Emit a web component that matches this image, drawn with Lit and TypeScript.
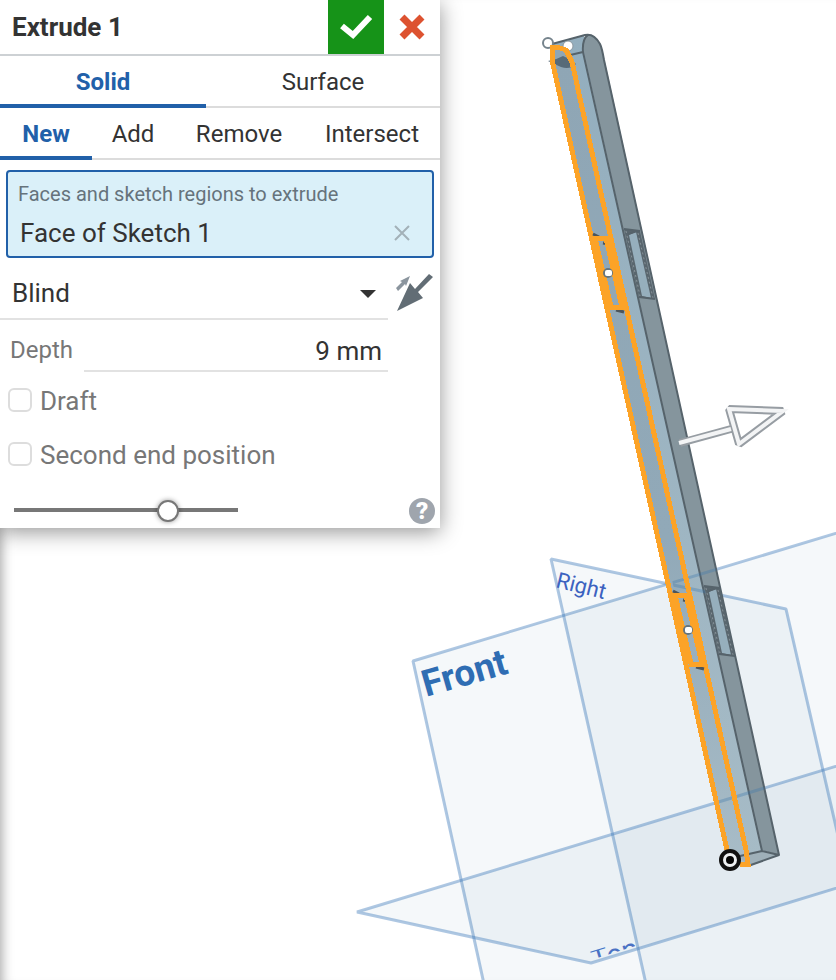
import { LitElement, html, svg, css } from "lit";
import { customElement, state } from "lit/decorators.js";
import { classMap } from "lit/directives/class-map.js";

@customElement("model-viewport")
class ModelViewport extends LitElement {
  static styles = css`
    :host {
      display: block;
    }
    .scene {
      display: block;
      width: 100%;
      height: 100%;
    }
    .plane {
      fill: rgba(80, 132, 172, 0.06);
      stroke: rgba(62, 122, 186, 0.42);
      stroke-width: 3;
      stroke-linejoin: bevel;
    }
    .plane-line {
      fill: none;
      stroke: #3f78ad;
      stroke-width: 3;
      opacity: 0.35;
    }
    .label {
      font-family: Roboto, "Liberation Sans", sans-serif;
      fill: #2f6db3;
    }
    .front {
      font-size: 37px;
      font-weight: 700;
    }
    .right {
      font-size: 22px;
      fill: #3c62c0;
    }
    .top {
      font-size: 28px;
      fill: #4a72c4;
    }
    .edge {
      fill: none;
      stroke: #56636b;
      stroke-width: 2;
      stroke-linejoin: round;
    }
    .picked {
      fill: none;
      stroke: #fca327;
      stroke-width: 5;
      shape-rendering: crispEdges;
    }
    .arrow-outer {
      fill: none;
      stroke: #979da3;
      stroke-width: 8;
      stroke-linejoin: bevel;
    }
    .arrow-inner {
      fill: none;
      stroke: #f3f4f5;
      stroke-width: 4;
    }
  `;

  private slot3d(x: number, y: number) {
    return svg`
      <g transform="translate(${x} ${y})">
        <path d="M624 229L640 231L655 299L639 297Z" fill="#59666e" />
        <path d="M629 235L636 232L651 298L642 296Z" fill="#96afbd" />
        <path d="M626 231L640 296M638 233L653 298" stroke="#879299" stroke-width="1" stroke-dasharray="2 3" />
        <path class="edge" d="M624 229L640 231M628 234L637 231M639 297L655 299" />
        <path d="M593 234l6 3M603 243l6 1M609 304l5 3M616 310l8 2" stroke="#4d555a" stroke-width="3" />
        <path class="picked" d="M592 238H609M609 307H626M595 238L611 307M606 238L622 307" />
        <circle cx="608" cy="273" r="5" fill="#65757f" />
        <rect x="605" y="270" width="7" height="6" rx="2" fill="#ffffff" />
      </g>`;
  }

  render() {
    return html`
      <svg class="scene" viewBox="0 0 836 980" preserveAspectRatio="xMinYMin slice" role="img" aria-label="Extruded bar with reference planes">
        <defs>
          <linearGradient id="face" x1="0" y1="0" x2="0" y2="1">
            <stop offset="0" stop-color="#8fa6b5" />
            <stop offset="0.6" stop-color="#91a9b8" />
            <stop offset="1" stop-color="#a8bcc7" />
          </linearGradient>
          <linearGradient id="rim" x1="0" y1="0" x2="0" y2="1">
            <stop offset="0" stop-color="#93aebe" />
            <stop offset="1" stop-color="#a6bbc6" />
          </linearGradient>
          <clipPath id="bar"><path d="M668 560L714 560L779 855L728 855Z" /></clipPath>
          <clipPath id="topStrip"><path d="M586 953L645 935L645 943L591 960Z" /></clipPath>
        </defs>

        <path class="plane" d="M850 529L413 661L484 984L850 984Z" />
        <path class="plane" d="M551 559L786 609L872 984L646 984Z" />
        <path class="plane" d="M850 762L357 912L591 963L850 884Z" />

        <text class="label front" transform="translate(426 697) rotate(-16)">Front</text>
        <text class="label right" transform="translate(555 587) rotate(14)">Right</text>
        <g clip-path="url(#topStrip)">
          <text class="label top" transform="translate(595 970) rotate(-17)">Top</text>
        </g>

        <path d="M583 52L583 40Q586 32 594 36Q600 40 603 53L779 855L761 850Z" fill="#85959d" />
        <path d="M552 44L584 35L584 52L761 850L779 855L750 866L727 856L551 60Z" fill="url(#rim)" />
        <path d="M551 60Q552 40 568 53L748 865L728 856Z" fill="url(#face)" />
        <path d="M762 851L779 855L748 866L740 857Z" fill="#9fb0b9" />
        <path class="edge" d="M552 44L585 35Q594 33 600 44Q602 48 604 60L779 855L762 851L740 856M779 855L748 866M566 56L583 52L762 851M583 52Q582 39 588 35" />
        <g clip-path="url(#bar)">
          <path class="plane-line" d="M413 661L850 529M551 559L786 609M357 912L850 762" />
        </g>

        <circle cx="548" cy="43" r="5" fill="#ffffff" stroke="#75838c" stroke-width="2" />
        <circle cx="568" cy="46" r="5" fill="#ffffff" stroke="#8a979f" stroke-width="1" />
        <path d="M548 61Q556 60 563 56Q572 60 576 64Q570 70 561 67Z" fill="#586b78" />
        <path class="picked" d="M727 850L552 60V47H557L566 50L572 62L746 850L748 864H740" />
        ${this.slot3d(0, 0)} ${this.slot3d(80, 357)}

        <path class="arrow-outer" d="M680 443L731 429M729 409L783 411L739 444Z" />
        <path class="arrow-inner" d="M679 443L731 429M729 409L783 411L739 444Z" />

        <circle cx="730" cy="860" r="9" fill="#eef0f2" stroke="#111111" stroke-width="4" />
        <circle cx="730" cy="860" r="4" fill="#050505" />
      </svg>
    `;
  }
}

@customElement("extrude-panel")
class ExtrudePanel extends LitElement {
  static styles = css`
    :host {
      display: block;
      box-sizing: border-box;
      background: #ffffff;
      color: #333333;
      font-family: Roboto, "Liberation Sans", sans-serif;
      box-shadow: 0 4px 20px rgba(0, 0, 0, 0.42);
    }
    * {
      box-sizing: border-box;
    }
    button,
    select,
    input {
      font: inherit;
      color: inherit;
      margin: 0;
      padding: 0;
      border: 0;
      background: none;
    }
    svg {
      display: block;
    }
    .header {
      display: flex;
      height: 56px;
      border-bottom: 2px solid #cdd1d4;
    }
    .title {
      flex: 1;
      margin: 0;
      padding-left: 12px;
      font-size: 26px;
      line-height: 54px;
      font-weight: 700;
    }
    .action {
      display: grid;
      place-items: center;
      width: 56px;
      height: 54px;
    }
    .accept {
      background: #169318;
    }
    .tabs {
      display: grid;
      height: 52px;
    }
    .body-type {
      grid-template-columns: 103fr 117fr;
    }
    .operation {
      grid-template-columns: 46fr 41fr 65fr 68fr;
    }
    .tab {
      font-size: 24px;
      line-height: 44px;
      border-bottom: 2px solid #dcdcdc;
      padding: 4px 0 2px;
    }
    .active {
      color: #2160a9;
      font-weight: 700;
      border-bottom: 4px solid #2160a9;
      padding-bottom: 0;
    }
    .picker {
      margin: 10px 6px 0;
      height: 88px;
      padding: 6px 10px;
      border: 2px solid #2160a9;
      border-radius: 4px;
      background: #daf0f9;
    }
    .hint {
      display: block;
      font-size: 20px;
      line-height: 32px;
      color: #66737c;
    }
    .item {
      display: flex;
      justify-content: space-between;
      align-items: center;
      padding: 0 10px 0 2px;
      font-size: 26px;
      line-height: 46px;
    }
    .row {
      display: flex;
      align-items: center;
    }
    .end-type {
      height: 62px;
      gap: 8px;
    }
    .select-wrap {
      display: grid;
      flex: 1;
      align-items: center;
      height: 62px;
      border-bottom: 2px solid #e2e2e2;
    }
    .select {
      grid-area: 1 / 1;
      appearance: none;
      width: 100%;
      height: 60px;
      padding: 10px 12px 0;
      font-size: 26px;
    }
    .caret {
      grid-area: 1 / 1;
      justify-self: end;
      margin: 12px 12px 0 0;
      pointer-events: none;
    }
    .flip {
      width: 44px;
      padding-top: 8px;
    }
    .depth {
      height: 52px;
      padding: 0 52px 0 10px;
    }
    .depth-label {
      width: 74px;
      padding-top: 8px;
      font-size: 24px;
      color: #777777;
    }
    .depth-input {
      flex: 1;
      min-width: 0;
      height: 52px;
      padding: 12px 6px 0 0;
      font-size: 26px;
      text-align: right;
      border-bottom: 2px solid #e2e2e2;
    }
    .checks {
      display: grid;
      gap: 20px;
      padding: 12px 8px 0;
    }
    .check {
      display: flex;
      align-items: flex-start;
      gap: 8px;
      font-size: 26px;
      line-height: 34px;
      color: #777777;
    }
    .box {
      appearance: none;
      width: 24px;
      height: 24px;
      margin-top: 4px;
      border: 2px solid #dddddd;
      border-radius: 6px;
      background: #ffffff;
    }
    .box:checked {
      background: #2160a9;
    }
    .footer {
      display: flex;
      justify-content: space-between;
      align-items: center;
      height: 56px;
      padding: 20px 5px 0 14px;
    }
    .slider {
      appearance: none;
      width: 224px;
      height: 24px;
    }
    .slider::-webkit-slider-runnable-track {
      height: 4px;
      background: #777777;
    }
    .slider::-webkit-slider-thumb {
      appearance: none;
      width: 22px;
      height: 22px;
      margin-top: -8px;
      border: 2px solid #777777;
      border-radius: 50%;
      background: #ffffff;
      box-shadow: 0 0 5px rgba(0, 0, 0, 0.4);
    }
    .help {
      width: 26px;
      height: 26px;
      margin-top: 2px;
      border-radius: 50%;
      background: #9fa5ad;
      color: #ffffff;
      font-size: 24px;
      line-height: 26px;
      font-weight: 900;
    }
  `;

  @state() private bodyType = "Solid";
  @state() private operation = "New";

  private tab(name: string, current: string, pick: (n: string) => void) {
    return html`<button
      role="tab"
      aria-selected=${name === current ? "true" : "false"}
      class=${classMap({ tab: true, active: name === current })}
      @click=${() => pick(name)}
    >${name}</button>`;
  }

  render() {
    return html`
      <header class="header">
        <h1 class="title">Extrude 1</h1>
        <button class="action accept" aria-label="Accept">
          <svg width="34" height="26" viewBox="0 0 34 26">
            <path d="M3 12L14 21L31 3" fill="none" stroke="#ffffff" stroke-width="6" />
          </svg>
        </button>
        <button class="action" aria-label="Cancel">
          <svg width="26" height="26" viewBox="0 0 26 26">
            <path d="M3 3L23 23M23 3L3 23" fill="none" stroke="#dd5230" stroke-width="7" />
          </svg>
        </button>
      </header>
      <div class="tabs body-type" role="tablist">
        ${["Solid", "Surface"].map((n) => this.tab(n, this.bodyType, (v) => (this.bodyType = v)))}
      </div>
      <div class="tabs operation" role="tablist">
        ${["New", "Add", "Remove", "Intersect"].map((n) => this.tab(n, this.operation, (v) => (this.operation = v)))}
      </div>
      <section class="picker">
        <span class="hint">Faces and sketch regions to extrude</span>
        <div class="item">
          <span>Face of Sketch 1</span>
          <button aria-label="Remove Face of Sketch 1">
            <svg width="20" height="20" viewBox="0 0 20 20">
              <path d="M3 3L17 17M17 3L3 17" fill="none" stroke="#a3b1b8" stroke-width="2" />
            </svg>
          </button>
        </div>
      </section>
      <div class="row end-type">
        <div class="select-wrap">
          <select class="select" aria-label="End type">
            <option>Blind</option>
            <option>Symmetric</option>
            <option>Up to next</option>
            <option>Through all</option>
          </select>
          <svg class="caret" width="16" height="8" viewBox="0 0 16 8"><path d="M0 0H16L8 8Z" fill="#333333" /></svg>
        </div>
        <button class="flip" aria-label="Opposite direction">
          <svg width="38" height="40" viewBox="0 0 38 40">
            <path d="M1 38L14 10L19 16L33 1L37 4L22 19L27 25Z" fill="#626d75" />
            <path d="M0 15L6 9L4 8L14 3L10 13L9 11L2 18Z" fill="#8b959e" />
          </svg>
        </button>
      </div>
      <div class="row depth">
        <label class="depth-label" for="depth">Depth</label>
        <input class="depth-input" id="depth" type="text" .value=${"9 mm"} />
      </div>
      <div class="checks">
        <label class="check"><input class="box" type="checkbox" />Draft</label>
        <label class="check"><input class="box" type="checkbox" />Second end position</label>
      </div>
      <footer class="footer">
        <input class="slider" type="range" min="0" max="100" .value=${"71"} aria-label="Preview opacity" />
        <button class="help" aria-label="Help">?</button>
      </footer>
    `;
  }
}

@customElement("app-root")
class AppRoot extends LitElement {
  static styles = css`
    :host {
      display: grid;
      min-height: 100vh;
      overflow: hidden;
      background: #ffffff;
      grid-template-columns: minmax(0, 1fr);
    }
    .viewport {
      grid-area: 1 / 1;
      height: 100vh;
      box-shadow: inset 12px 0 12px -10px rgba(0, 0, 0, 0.35);
    }
    .panel {
      grid-area: 1 / 1;
      align-self: start;
      width: 440px;
      max-width: 100%;
    }
  `;

  render() {
    return html`
      <model-viewport class="viewport"></model-viewport>
      <extrude-panel class="panel"></extrude-panel>
    `;
  }
}
